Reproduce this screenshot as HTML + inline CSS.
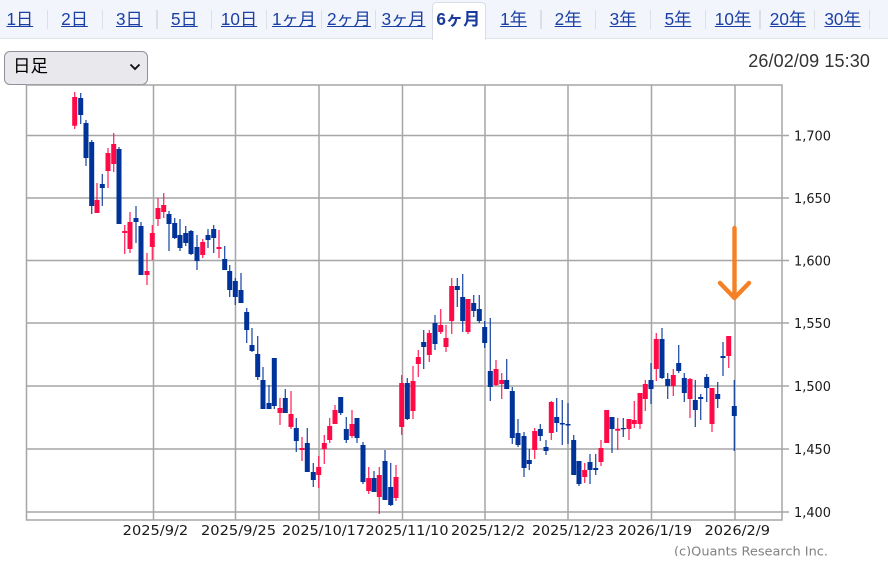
<!DOCTYPE html>
<html lang="ja"><head><meta charset="utf-8"><title>Chart</title>
<style>
html,body{margin:0;padding:0;background:#fff;width:888px;height:572px;overflow:hidden;position:relative;font-family:"Liberation Sans","Noto Sans CJK JP",sans-serif}
#tabs{position:absolute;left:0;top:0;width:888px;height:38px;background:#f2f5fb;border-bottom:1.5px solid #dfe3ec}
#tabs a{position:absolute;top:4px;width:54.7px;text-align:center;font-size:17.2px;line-height:30px;color:#1a3fa5;text-decoration:underline;white-space:nowrap}
#tabs i{position:absolute;top:10px;width:1.4px;height:19px;background:#dcdfe4}
#tabs b.act{position:absolute;left:432px;top:2px;width:52px;height:37px;background:#fff;border:1.5px solid #d8dde7;border-bottom:none;border-radius:4px 4px 0 0;box-sizing:content-box}
#tabs a.on{font-weight:bold;text-decoration:none;color:#1a3a9c}
#sel{position:absolute;left:4px;top:51px;width:142px;height:32px;background:#e9e9ed;border:1px solid #8f8f9d;border-radius:6px;font-size:17.5px;line-height:29px;color:#000;text-indent:8px}
#sel svg{position:absolute;left:124px;top:10px}
#time{position:absolute;right:18px;top:50px;font-size:18px;letter-spacing:.12px;line-height:22px;color:#333;white-space:nowrap}
#chart{position:absolute;left:0;top:0;filter:blur(.35px)}
#copy{position:absolute;left:674px;top:541px;width:170px;height:15px;overflow:hidden;filter:blur(.3px)}
</style></head><body>
<div id="tabs">
<b class="act"></b>
<a href="#" style="left:-7.5px">1日</a><i style="left:47px"></i>
<a href="#" style="left:47.2px">2日</a><i style="left:101.6px"></i>
<a href="#" style="left:102px">3日</a><i style="left:156.3px"></i>
<a href="#" style="left:157px">5日</a><i style="left:211px"></i>
<a href="#" style="left:211.7px">10日</a><i style="left:266px"></i>
<a href="#" style="left:266.6px">1ヶ月</a><i style="left:320.5px"></i>
<a href="#" style="left:321.6px">2ヶ月</a><i style="left:375px"></i>
<a href="#" style="left:376.2px">3ヶ月</a>
<a href="#" class="on" style="left:431px">6ヶ月</a>
<a href="#" style="left:486.2px">1年</a><i style="left:540.2px"></i>
<a href="#" style="left:540.7px">2年</a><i style="left:595px"></i>
<a href="#" style="left:595.6px">3年</a><i style="left:649.6px"></i>
<a href="#" style="left:650.6px">5年</a><i style="left:704.6px"></i>
<a href="#" style="left:705.6px">10年</a><i style="left:759.4px"></i>
<a href="#" style="left:760.6px">20年</a><i style="left:814px"></i>
<a href="#" style="left:815.2px">30年</a><i style="left:869px"></i>
</div>
<div id="sel">日足<svg width="12" height="10" viewBox="0 0 12 10"><path d="M1.5 2.5 L6 7 L10.5 2.5" fill="none" stroke="#111" stroke-width="1.9"/></svg></div>
<div id="time">26/02/09 15:30</div>
<svg id="chart" width="888" height="572" viewBox="0 0 888 572">
<g fill="none" stroke="#a6a6a6" stroke-width="1.5">
<path d="M26.5 85H782V520H26.5Z"/>
<path d="M153.5 85V520M235.5 85V520M319 85V520M402.5 85V520M485 85V520M568 85V520M651.5 85V520M735 85V520"/>
<path d="M26.5 135.5H789M26.5 198H789M26.5 260.5H789M26.5 323H789M26.5 386H789M26.5 449H789M26.5 512H789"/>
</g>
<g fill="none" stroke-opacity=".85" stroke-width="1.3">
<path stroke="#ff0a46" d="M74.7 92V129M97 183V213M108 148V188M113.7 133V172M124.7 225V254M130 212V253M147 253V285M152.3 225V260M158 198V226M163.7 193V218M202.7 239V258M219 230V258M280 398V425M291 391V429M302 437V461M318.7 456V488M324.3 435V464M329.7 418V443M335 405V424M352 410V438M368.7 467V494M379.3 467V514M396 465V501M401.7 375V435M413 366V419M418.3 350V377M429.3 330V362M440.7 309V334M446 325V352M451.7 278V334M468 299V334M496 360V386M501.7 373V399M534.7 428V459M551.3 401V440M584.7 463V483M601 440V466M606.7 410V443M617.7 418V450M629 419V440M634.3 401V428M640 393V429M645.3 380V411M656.3 333V381M673.3 369V396M690 378V418M712 388V432M728.7 336V368"/>
<path stroke="#003399" d="M80.7 93V124M86 120V166M91.7 140V214M102.3 174V206M119 147V224M136 206V243M141 222V275M169 211V251M174.7 218V239M180 219V251M185.7 226V246M191 230V255M197 235V270M208 229V248M213.7 225V253M224.7 246V270M229.7 265V297M235.3 278V305M241 273V303M246.7 308V343M252 328V352M257.7 336V380M263 367V409M269 385V409M274.3 358V409M285.3 389V413M296.3 418V452M307.3 428V472M313.3 463V487M340.7 397V415M346.3 417V443M357 418V443M363 442V484M374 471V492M385 450V500M390.7 463V506M407.3 378V420M423.7 330V369M435 315V350M457.3 278V307M462.7 274V332M473.7 295V317M479.3 295V323M484.7 321V348M490.3 318V401M506.7 359V389M512.3 387V444M518 419V447M524 432V477M529.3 449V470M540.3 424V441M546 440V455M556.7 398V432M562.3 400V445M568 403V444M573.7 435V475M579 461V486M590 454V484M595.7 454V475M612 417V453M623.3 418V437M651 363V404M662 328V379M667.7 373V399M678.7 345V373M684.3 373V402M695.3 380V427M700.7 394V420M706.7 374V402M717.7 382V408M723 342V376M734.3 380V451"/>
</g>
<g fill="none" stroke-width="5">
<path stroke="#ff0a46" d="M74.7 97V125.7M97 200V213M108 153V171M113.7 144V164M124.7 231V233M130 222V249M147 271V275M152.3 233V247M158 208V219M163.7 205V212M202.7 242V255M219 247V249M280 408V413M291 414V427M302 448V450M318.7 467V475M324.3 443V449M329.7 426V440M335 410V424M352 424V436M368.7 478V491M379.3 475V497M396 477V498M401.7 383V427M413 381V411M418.3 357V364M429.3 333V355M440.7 325V332M446 338V347M451.7 286V321M468 299V332M496 369V385M501.7 380V384M534.7 431V450M551.3 402V433M584.7 470V477M601 448V462M606.7 410V443M617.7 428.7V430.7M629 419V429M634.3 420V424M640 393V424M645.3 384V399M656.3 339V369M673.3 375V386M690 379V399M712 388V424M728.7 336V356"/>
<path stroke="#003399" d="M80.7 98V115M86 123V158M91.7 142V206M102.3 184V188M119 149V224M136 218V222M141 226V275M169 214V224M174.7 223V238M180 235V248M185.7 233V243M191 231V254M197 247V261M208 235V240M213.7 229V238M224.7 259V270M229.7 271V290M235.3 281V297M241 290V303M246.7 312V330M252 345V351M257.7 354V377M263 380V409M269 403V409M274.3 358V406M285.3 398V413M296.3 428V441M307.3 443V472M313.3 472V480M340.7 397V413M346.3 429V440M357 418V438M363 445V482M374 478V492M385 461V500M390.7 487V505M407.3 383V419M423.7 342V347M435 323V344M457.3 286V290M462.7 297V321M473.7 303V311M479.3 309V321M484.7 327V343M490.3 371V387M506.7 380V389M512.3 391V438M518 433V445M524 436V468M529.3 460V464M540.3 429V436M546 447V451M556.7 417V423M562.3 423V424.5M568 424V425.5M573.7 440V475M579 461V484M590 462V470M595.7 468V470M612 417V429M623.3 428V429.3M651 380V389M662 339V378M667.7 379V386M678.7 363V371M684.3 378V393M695.3 400V410M700.7 397V399M706.7 377V388M717.7 394V399M723 356V358M734.3 406V416"/>
</g>
<path d="M734.5 228V298M720 283L734.5 298L749 283" fill="none" stroke="#f58025" stroke-width="4.4" stroke-linecap="round" stroke-linejoin="round"/>
<g font-family="'DejaVu Sans',sans-serif" font-size="13.6" fill="#1a1a1a">
<text x="794" y="140.5" textLength="37" lengthAdjust="spacingAndGlyphs">1,700</text>
<text x="794" y="203" textLength="37" lengthAdjust="spacingAndGlyphs">1,650</text>
<text x="794" y="265.5" textLength="37" lengthAdjust="spacingAndGlyphs">1,600</text>
<text x="794" y="328" textLength="37" lengthAdjust="spacingAndGlyphs">1,550</text>
<text x="794" y="391" textLength="37" lengthAdjust="spacingAndGlyphs">1,500</text>
<text x="794" y="454" textLength="37" lengthAdjust="spacingAndGlyphs">1,450</text>
<text x="794" y="517" textLength="37" lengthAdjust="spacingAndGlyphs">1,400</text>
<text x="122.7" y="535" textLength="65.5" lengthAdjust="spacingAndGlyphs">2025/9/2</text>
<text x="201" y="535" textLength="75" lengthAdjust="spacingAndGlyphs">2025/9/25</text>
<text x="282" y="535" textLength="83" lengthAdjust="spacingAndGlyphs">2025/10/17</text>
<text x="365.5" y="535" textLength="83" lengthAdjust="spacingAndGlyphs">2025/11/10</text>
<text x="451" y="535" textLength="74" lengthAdjust="spacingAndGlyphs">2025/12/2</text>
<text x="532" y="535" textLength="82" lengthAdjust="spacingAndGlyphs">2025/12/23</text>
<text x="618" y="535" textLength="74" lengthAdjust="spacingAndGlyphs">2026/1/19</text>
<text x="704.5" y="535" textLength="65.5" lengthAdjust="spacingAndGlyphs">2026/2/9</text>
</g>
</svg>
<svg id="copy" width="170" height="15" viewBox="0 0 170 15"><text x="0" y="14.5" font-family="'DejaVu Sans',sans-serif" font-size="12.4" fill="#808080" textLength="154" lengthAdjust="spacingAndGlyphs">(c)Quants Research Inc.</text></svg>
</body></html>
